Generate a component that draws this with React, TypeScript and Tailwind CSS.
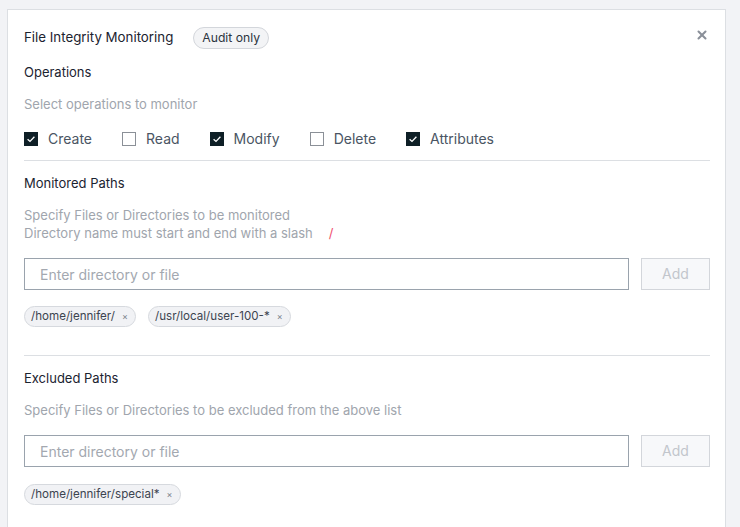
import { X } from "lucide-react";

const operations = [
  { label: "Create", checked: true },
  { label: "Read", checked: false },
  { label: "Modify", checked: true },
  { label: "Delete", checked: false },
  { label: "Attributes", checked: true },
];

const Check = ({ checked }: { checked: boolean }) =>
  checked ? (
    <span className="flex h-[14px] w-[14px] items-center justify-center bg-[#0e1f26]">
      <svg viewBox="0 0 14 14" className="h-[14px] w-[14px]" fill="none">
        <path d="M3.6 7.2 6 9.4 10.4 4.8" stroke="white" strokeWidth="1.3" />
      </svg>
    </span>
  ) : (
    <span className="h-[14px] w-[14px] border border-[#8b9097] bg-white" />
  );

const Tag = ({ text }: { text: string }) => (
  <span className="flex h-[21px] items-center gap-[7px] rounded-full border border-[#d6d9de] bg-[#f1f2f5] pl-[6px] pr-[7px] text-[11.6px] text-[#3c4450]">
    {text}
    <span className="text-[9px] leading-none text-[#7b828c]">×</span>
  </span>
);

const PathInput = () => (
  <div className="flex gap-3">
    <input
      className="h-8 flex-1 border border-[#9aa3ad] bg-white px-[15px] text-sm text-[#3c4450] outline-none placeholder:text-[#a3a8b0]"
      placeholder="Enter directory or file"
    />
    <button className="h-8 w-[69px] border border-[#d3d6db] bg-[#f7f8fa] text-sm text-[#c2c6cc]">
      Add
    </button>
  </div>
);

export default function App() {
  return (
    <div
      className="h-[527px] overflow-hidden bg-[#f2f3f6] pl-[7px] pr-[14px] pt-[9px]"
      style={{ fontFamily: "Inter, 'Liberation Sans', sans-serif" }}
    >
      <div className="relative h-[600px] border border-[#dcdfe3] bg-white pl-4 pr-[15px] pt-[17px]">
        <button className="absolute right-[16px] top-[18px] text-[#8a9099]">
          <X className="h-[14px] w-[14px]" strokeWidth={3.5} />
        </button>

        <div className="flex h-[22px] items-center gap-5">
          <span className="text-[13.3px] text-[#1b2330]">
            File Integrity Monitoring
          </span>
          <span className="flex h-[22px] items-center rounded-full border border-[#d3d6db] bg-[#f3f4f6] px-2 text-[12.2px] text-[#2c3440]">
            Audit only
          </span>
        </div>

        <p className="mt-[13px] text-[13px] leading-5 text-[#1b2330]">
          Operations
        </p>
        <p className="mt-3 text-[13px] leading-5 text-[#a0a5ad]">
          Select operations to monitor
        </p>

        <div className="mt-[15px] flex h-5 items-center">
          {operations.map((op) => (
            <label
              key={op.label}
              className="mr-[30px] flex items-center gap-[10px] text-sm text-[#4a5563]"
            >
              <Check checked={op.checked} />
              {op.label}
            </label>
          ))}
        </div>

        <div className="mt-[11px] h-px bg-[#dcdfe3]" />

        <p className="mt-3 text-[13px] leading-5 text-[#1b2330]">
          Monitored Paths
        </p>
        <div className="mt-[13px] text-[13px] leading-[18px] text-[#a0a5ad]">
          <p>Specify Files or Directories to be monitored</p>
          <p>
            Directory name must start and end with a slash
            <span className="ml-4 text-[#f0506e]">/</span>
          </p>
        </div>

        <div className="mt-4">
          <PathInput />
        </div>

        <div className="mt-4 flex gap-3">
          <Tag text="/home/jennifer/" />
          <Tag text="/usr/local/user-100-*" />
        </div>

        <div className="mt-7 h-px bg-[#dcdfe3]" />

        <p className="mt-3 text-[13px] leading-5 text-[#1b2330]">
          Excluded Paths
        </p>
        <p className="mt-[13px] text-[13px] leading-[18px] text-[#a0a5ad]">
          Specify Files or Directories to be excluded from the above list
        </p>

        <div className="mt-4">
          <PathInput />
        </div>

        <div className="mt-[17px] flex gap-3">
          <Tag text="/home/jennifer/special*" />
        </div>
      </div>
    </div>
  );
}
